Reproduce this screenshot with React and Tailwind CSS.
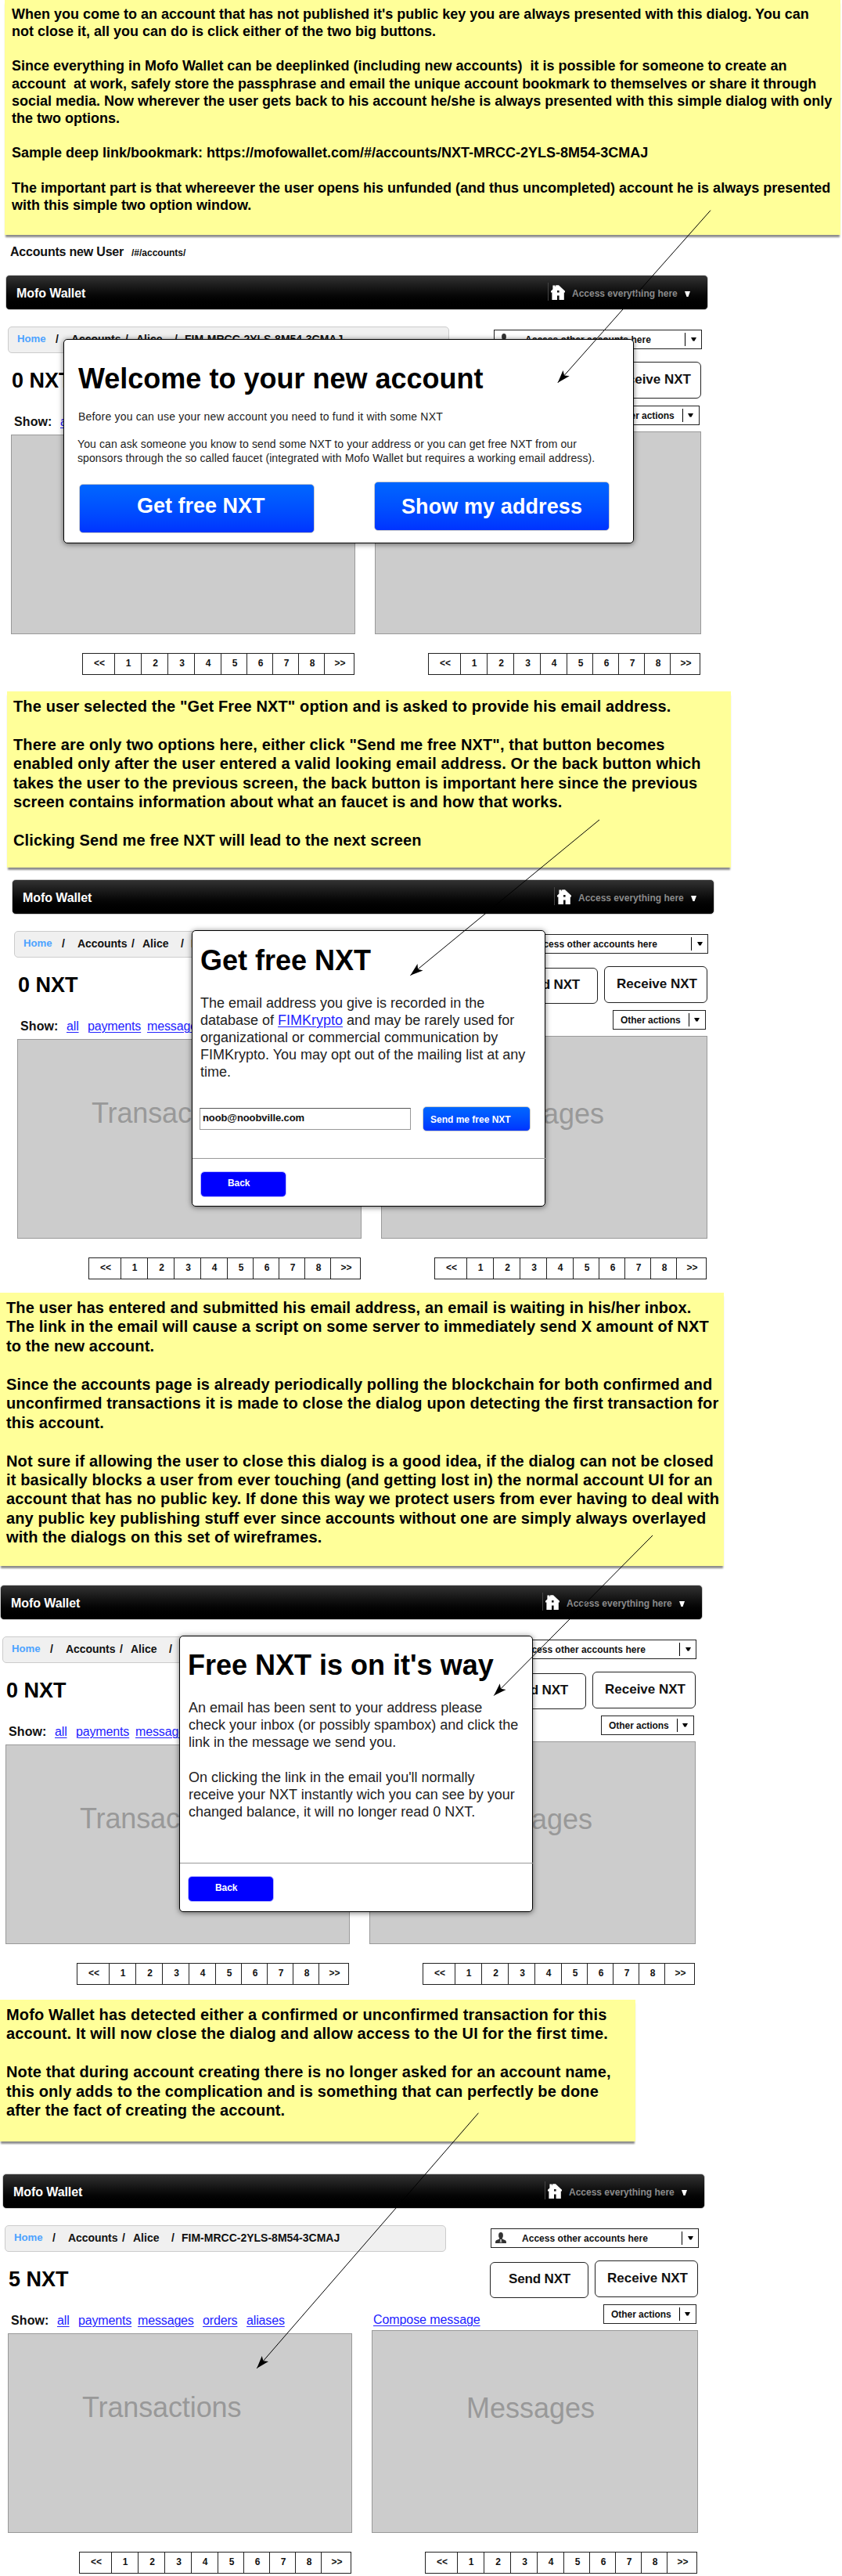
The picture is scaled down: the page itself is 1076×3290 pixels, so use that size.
import React from "react";

const NOTE_1 = `When you come to an account that has not published it's public key you are always presented with this dialog. You can
not close it, all you can do is click either of the two big buttons.

Since everything in Mofo Wallet can be deeplinked (including new accounts)  it is possible for someone to create an
account  at work, safely store the passphrase and email the unique account bookmark to themselves or share it through
social media. Now wherever the user gets back to his account he/she is always presented with this simple dialog with only
the two options.

Sample deep link/bookmark: https://mofowallet.com/#/accounts/NXT-MRCC-2YLS-8M54-3CMAJ

The important part is that whereever the user opens his unfunded (and thus uncompleted) account he is always presented
with this simple two option window.`;

const NOTE_2 = `The user selected the "Get Free NXT" option and is asked to provide his email address.

There are only two options here, either click "Send me free NXT", that button becomes
enabled only after the user entered a valid looking email address. Or the back button which
takes the user to the previous screen, the back button is important here since the previous
screen contains information about what an faucet is and how that works.

Clicking Send me free NXT will lead to the next screen`;

const NOTE_3 = `The user has entered and submitted his email address, an email is waiting in his/her inbox.
The link in the email will cause a script on some server to immediately send X amount of NXT
to the new account.

Since the accounts page is already periodically polling the blockchain for both confirmed and
unconfirmed transactions it is made to close the dialog upon detecting the first transaction for
this account.

Not sure if allowing the user to close this dialog is a good idea, if the dialog can not be closed
it basically blocks a user from ever touching (and getting lost in) the normal account UI for an
account that has no public key. If done this way we protect users from ever having to deal with
any public key publishing stuff ever since accounts without one are simply always overlayed
with the dialogs on this set of wireframes.`;

const NOTE_4 = `Mofo Wallet has detected either a confirmed or unconfirmed transaction for this
account. It will now close the dialog and allow access to the UI for the first time.

Note that during account creating there is no longer asked for an account name,
this only adds to the complication and is something that can perfectly be done
after the fact of creating the account.`;

function Note({ className, children }) {
  return (
    <div
      className={`shrink-0 whitespace-pre bg-[#ffff99] font-bold text-black shadow-[0_4px_2px_-1px_rgba(0,0,0,0.45)] ${className}`}
    >
      {children}
    </div>
  );
}

function House() {
  return (
    <svg className="mt-[12px] ml-[3px] block shrink-0" width="18" height="19" viewBox="0 0 18 19">
      <path d="M2.400 0.500H5.400V2.500L6.400 0.300H10L18 7.800V9.500H16.800V19H1.400V9.500H0V7.800L2.400 5.500Z" fill="#fff" />
      <rect x="8" y="7" width="2.600" height="2.600" fill="#1a1a1a" />
      <rect x="8" y="13.500" width="2.600" height="5.500" fill="#0c0c0c" />
    </svg>
  );
}

function Person() {
  return (
    <svg className="ml-[5px] block shrink-0" width="14" height="15" viewBox="0 0 14 15">
      <ellipse cx="7" cy="4" rx="2.900" ry="3.900" fill="#333" />
      <path fill="#333" d="M5.200 6H8.800V8.600L12.800 10.200C13.600 10.600 14 11.400 14 14H0C0 11.400 0.400 10.600 1.200 10.200L5.200 8.600Z" />
      <path fill="#fff" d="M6.200 9.200H7.800L8.300 13.200H5.700Z" />
      <path fill="#333" d="M6.700 10H7.300L7.600 14H6.400Z" />
    </svg>
  );
}

function Caret() {
  return (
    <svg className="block shrink-0" width="7" height="5" viewBox="0 0 7 5">
      <path d="M0 0H7L4.500 4.500H2.500Z" fill="#000" />
    </svg>
  );
}

function Header() {
  return (
    <div className="flex h-[45px] w-[898px] rounded-[5px] border border-[#ccc] bg-linear-to-b from-[#333] to-black">
      <div className="w-[692px] pt-[11px] pl-[13px] text-[16px] leading-[24px] font-bold tracking-[-0.08px] text-white">
        Mofo Wallet
      </div>
      <div className="mt-[9px] h-[23px] w-px bg-[#444]" />
      <House />
      <div className="mt-[15px] ml-[9px] w-[144px] text-[12px] leading-[16px] font-bold text-[#8a8a8a]">
        Access everything here
      </div>
      <svg className="mt-[20px] block" width="7" height="7" viewBox="0 0 7 7">
        <path d="M0 0H7L4.500 7H2.500Z" fill="#fff" />
      </svg>
    </div>
  );
}

function Breadcrumb() {
  return (
    <div className="flex h-[34px] w-[564px] rounded-[5px] border border-[#ccc] bg-[#f0f0f0] pt-[5px] pl-[11px] text-[14px] leading-[20px] font-bold whitespace-nowrap text-[#111]">
      <span className="w-[49px] text-[13.2px] text-[#4da3ff]">Home</span>
      <span className="w-[20px]">/</span>
      <span className="w-[69px] tracking-[-0.05px]">Accounts</span>
      <span className="w-[14px]">/</span>
      <span className="w-[49px]">Alice</span>
      <span className="w-[13px]">/</span>
      <span>FIM-MRCC-2YLS-8M54-3CMAJ</span>
    </div>
  );
}

function Filter({ className = "", children }) {
  return (
    <div className={`shrink-0 ${className}`}>
      <a className="tracking-[-0.15px] text-[#2222ff] underline decoration-1 underline-offset-2">{children}</a>
    </div>
  );
}

const PAGES = [
  ["<<", "w-[40px] pl-[2px]"],
  ["1", "w-[34px] pl-px"],
  ["2", "w-[34px] pl-[2px]"],
  ["3", "w-[34px] pl-[2px]"],
  ["4", "w-[34px] pl-px"],
  ["5", "w-[33px] pl-[2px]"],
  ["6", "w-[33px] pl-[2px]"],
  ["7", "w-[33px] pl-[2px]"],
  ["8", "w-[33px] pl-[2px]"],
  [">>", "w-[39px] pl-px"],
];

function Pagination({ className }) {
  return (
    <div
      className={`flex h-[28px] w-[348px] border border-[#222] bg-white text-center text-[12px] leading-[16px] font-bold text-[#111] ${className}`}
    >
      {PAGES.map(([label, size], i) => (
        <div key={label} className={`shrink-0 pt-[4px] ${size} ${i > 0 ? "border-l border-[#222]" : ""}`}>
          {label}
        </div>
      ))}
    </div>
  );
}

function Frame({ className, balance, children }) {
  return (
    <section className={`relative h-[511px] w-[898px] shrink-0 text-[#111] ${className}`}>
      <Header />
      <div className="mt-[21px] ml-[3px] flex h-[34px] w-[890px]">
        <Breadcrumb />
        <div className="mt-[4px] ml-[57px] flex h-[25px] w-[266px] items-center border border-[#222] bg-white text-[12px] leading-[16px] font-bold">
          <Person />
          <span className="ml-[20px] w-[204px] tracking-[0.03px]">Access other accounts here</span>
          <span className="mr-[7px] h-[17px] w-px bg-black" />
          <Caret />
        </div>
      </div>
      <div className="mt-[11px] flex h-[48px]">
        <div className="mt-[6px] w-[623px] pl-[8px] text-[27px] leading-[36px] font-bold text-black">{balance}</div>
        <div className="mt-[2px] h-[46px] w-[126px] rounded-[6px] border border-[#222] bg-white pt-[9px] pl-[23px] text-[17px] leading-[24px] font-bold tracking-[-0.15px]">
          Send NXT
        </div>
        <div className="ml-[8px] h-[47px] w-[132px] rounded-[6px] border border-[#222] bg-white pt-[10px] pl-[15px] text-[17px] leading-[24px] font-bold">
          Receive NXT
        </div>
      </div>
      <div className="mt-[8px] flex h-[33px] text-[16px] leading-[24px]">
        <div className="mt-[9px] w-[58px] shrink-0 pl-[11px] font-bold whitespace-nowrap">
          <span className="tracking-[0.1px]">Show:</span>
        </div>
        <div className="mt-[9px] ml-[12px] flex w-[402px] shrink-0">
          <Filter className="w-[27px]">all</Filter>
          <Filter className="w-[76px]">payments</Filter>
          <Filter className="w-[83px]">messages</Filter>
          <Filter className="w-[56px]">orders</Filter>
          <Filter>aliases</Filter>
        </div>
        <div className="mt-[8px] ml-[2px] w-[294px]">
          <a className="tracking-[-0.08px] text-[#2222ff] underline decoration-1 underline-offset-2">Compose message</a>
        </div>
        <div className="flex h-[25px] w-[119px] shrink-0 items-center border border-[#222] bg-white text-[12px] leading-[16px] font-bold whitespace-nowrap">
          <span className="w-[96px] pl-[9px] tracking-[-0.05px]">Other actions</span>
          <span className="mr-[6px] h-[17px] w-px shrink-0 bg-black" />
          <Caret />
        </div>
      </div>
      <div className="ml-[7px] flex items-end text-[36px] leading-[40px] text-[#999]">
        <div className="h-[255px] w-[440px] border border-[#999] bg-[#ccc] pt-[74px] pl-[94px]">
          <span className="tracking-[-0.12px]">Transactions</span>
        </div>
        <div className="ml-[25px] h-[259px] w-[417px] border border-[#999] bg-[#ccc] pt-[79px] pl-[120px]">Messages</div>
      </div>
      <div className="mt-[24px] flex">
        <Pagination className="ml-[98px]" />
        <Pagination className="ml-[94px]" />
      </div>
      {children}
    </section>
  );
}

function Dialog({ className, children }) {
  return (
    <div
      className={`absolute flex flex-col rounded-[5px] border border-black bg-white text-[#222] shadow-[0_1px_7px_rgba(0,0,0,0.55)] ${className}`}
    >
      {children}
    </div>
  );
}

function BackRow() {
  return (
    <div className="-mr-px border-t border-[#999] pt-[16px] pl-[10px]">
      <button className="block h-[33px] w-[110px] rounded-[5px] border border-[#bbf] bg-[#0000ff] bg-clip-padding pb-[3px] pl-[34px] text-left text-[12px] leading-[16px] font-bold tracking-[-0.1px] text-white">
        Back
      </button>
    </div>
  );
}

const ARROWS = [
  [908, 268.7, 712.8, 488.8],
  [766, 1047, 524.4, 1245.7],
  [834, 1961, 631.2, 2165.6],
  [611.4, 2698.7, 328.2, 3024.8],
];

function Arrows() {
  return (
    <svg className="pointer-events-none absolute top-0 left-0" width="1076" height="3290" viewBox="0 0 1076 3290">
      {ARROWS.map(([x1, y1, x2, y2]) => (
        <g key={y1}>
          <line x1={x1} y1={y1} x2={x2} y2={y2} stroke="#000" strokeWidth="1" />
          <path
            d="M0 0L16.300 -5.500L12.500 0L16.300 5.500Z"
            fill="#000"
            transform={`translate(${x2} ${y2}) rotate(${(Math.atan2(y1 - y2, x1 - x2) * 180) / Math.PI})`}
          />
        </g>
      ))}
    </svg>
  );
}

export default function App() {
  return (
    <main className="relative flex h-[3290px] w-[1076px] flex-col items-start overflow-hidden bg-white font-['Liberation_Sans',Arial,sans-serif]">
      <Note className="ml-[6px] h-[300px] w-[1068px] pt-[7px] pl-[9px] text-[18px] leading-[22.15px]">{NOTE_1}</Note>

      <div className="flex h-[51px] shrink-0 items-baseline pt-[10px] pl-[13px] leading-[24px] font-bold text-[#111]">
        <span className="w-[155px] text-[16px] tracking-[-0.2px]">Accounts new User</span>
        <span className="text-[12px]">/#/accounts/</span>
      </div>

      <Frame className="ml-[7px]" balance="0 NXT">
        <Dialog className="top-[82px] left-[74px] h-[261px] w-[729px]">
          <h1 className="mt-[30px] ml-[18px] text-[36px] leading-[40px] font-bold text-black">
            Welcome to your new account
          </h1>
          <p className="mt-[19px] ml-[18px] text-[14px] leading-[18px] tracking-[0.2px]">
            Before you can use your new account you need to fund it with some NXT
          </p>
          <p className="mt-[17px] ml-[17px] text-[14px] leading-[18px] tracking-[0.1px] whitespace-pre">
            {"You can ask someone you know to send some NXT to your address or you can get free NXT from our\nsponsors through the so called faucet (integrated with Mofo Wallet but requires a working email address)."}
          </p>
          <div className="mt-[21px] ml-[19px] flex text-[27px] leading-[32px] font-bold text-white">
            <button className="mt-[3px] h-[63px] w-[301px] rounded-[5px] border border-[#ccc] bg-linear-to-b from-[#0066ff] to-[#0033ff] pb-[8px] pl-[73px] text-left">
              Get free NXT
            </button>
            <button className="ml-[76px] h-[63px] w-[301px] rounded-[5px] border border-[#ccc] bg-linear-to-b from-[#0066ff] to-[#0033ff] pl-[34px] text-left tracking-[0.1px]">
              Show my address
            </button>
          </div>
        </Dialog>
      </Frame>

      <Note className="mt-[21px] ml-[9px] h-[225px] w-[925px] pt-[7px] pl-[8px] text-[20px] leading-[24.43px] tracking-[0.13px]">
        {NOTE_2}
      </Note>

      <Frame className="mt-[15px] ml-[15px]" balance="0 NXT">
        <Dialog className="top-[65px] left-[230px] h-[353px] w-[452px]">
          <h1 className="mt-[18px] ml-[10px] text-[36px] leading-[40px] font-bold text-black">Get free NXT</h1>
          <p className="mt-[23px] ml-[10px] h-[110px] text-[18px] leading-[22.05px] whitespace-pre">
            {"The email address you give is recorded in the\ndatabase of "}
            <a className="text-[#2222ff] underline decoration-1 underline-offset-2">FIMKrypto</a>
            {" and may be rarely used for\norganizational or commercial communication by\nFIMKrypto. You may opt out of the mailing list at any\ntime."}
          </p>
          <div className="mt-[33px] ml-[9px] flex h-[66px] items-start font-bold">
            <div className="mt-[2px] h-[28px] w-[270px] border border-[#999] border-t-[#555] bg-white pt-[4px] pl-[3px] text-[13px] leading-[16px] tracking-[-0.1px] text-[#111]">
              noob@noobville.com
            </div>
            <button className="ml-[15px] h-[32px] w-[138px] rounded-[5px] border border-[#ccc] bg-linear-to-b from-[#0066ff] to-[#0033ff] pt-px pl-[9px] text-left text-[12px] leading-[16px] text-white">
              Send me free NXT
            </button>
          </div>
          <BackRow />
        </Dialog>
      </Frame>

      <Note className="mt-[17px] h-[349px] w-[925px] pt-[7px] pl-[8px] text-[20px] leading-[24.43px] tracking-[0.13px]">
        {NOTE_3}
      </Note>

      <Frame className="mt-[24px]" balance="0 NXT">
        <Dialog className="top-[65px] left-[229px] h-[353px] w-[452px]">
          <h1 className="mt-[17px] ml-[10px] text-[36px] leading-[40px] font-bold text-black">
            Free NXT is on it's way
          </h1>
          <p className="mt-[23px] ml-[11px] h-[209px] text-[18px] leading-[22.15px] whitespace-pre">
            {"An email has been sent to your address please\ncheck your inbox (or possibly spambox) and click the\nlink in the message we send you.\n\nOn clicking the link in the email you'll normally\nreceive your NXT instantly wich you can see by your\nchanged balance, it will no longer read 0 NXT."}
          </p>
          <BackRow />
        </Dialog>
      </Frame>

      <Note className="mt-[19px] h-[181px] w-[812px] pt-[7px] pl-[8px] text-[20px] leading-[24.43px] tracking-[0.13px]">
        {NOTE_4}
      </Note>

      <Frame className="mt-[41px] ml-[3px]" balance="5 NXT" />

      <Arrows />
    </main>
  );
}
